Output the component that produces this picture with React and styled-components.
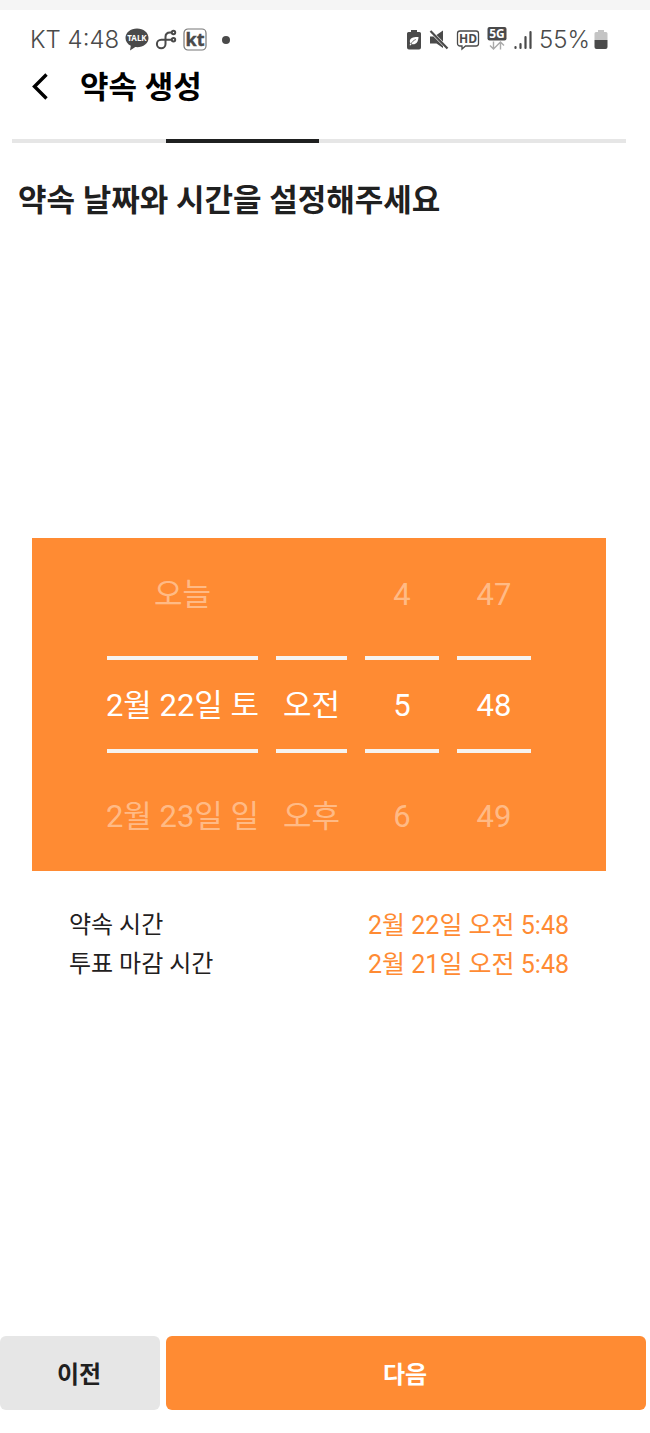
import React from "react";
import styled, { createGlobalStyle } from "styled-components";

const orange = "#ff8b33";
const ink = "#1f2020";
const statusInk = "#4a4a4a";

const GlobalStyle = createGlobalStyle`
  * { box-sizing: border-box; }
  body {
    margin: 0;
    background: #fff;
    color: ${ink};
    font-family: Roboto, "Noto Sans CJK KR", sans-serif;
  }
`;

const Screen = styled.div`
  display: flex;
  flex-direction: column;
  min-height: 100vh;
  border-top: 10px solid #f5f5f5;
`;

const StatusBar = styled.div`
  display: flex;
  justify-content: space-between;
  align-items: center;
  height: 48px;
  margin-top: 6px;
  padding: 0 42px 0 30px;
  color: ${statusInk};
  font-family: Inter, sans-serif;
  font-size: 24px;
  font-weight: 300;
  line-height: 32px;
`;

const StatusGroup = styled.div`
  display: flex;
  align-items: center;
  gap: ${({ $gap }) => $gap}px;
`;

const StatusDot = styled.span`
  width: 8px;
  height: 8px;
  margin-left: 9px;
  border-radius: 50%;
  background: ${statusInk};
`;

const Header = styled.header`
  display: flex;
  align-items: center;
  gap: 24px;
  height: 48px;
  padding-left: 24px;
`;

const BackButton = styled.button`
  display: flex;
  padding: 0;
  border: 0;
  background: none;
  color: #000;
  cursor: pointer;
`;

const Title = styled.h1`
  margin: 0;
  color: #000;
  font-size: 31px;
  font-weight: 700;
  line-height: 46px;
`;

const Progress = styled.div`
  display: grid;
  grid-template-columns: repeat(4, 1fr);
  height: 4px;
  margin: 27px 24px 0 12px;
`;

const Step = styled.span`
  background: ${({ $active }) => ($active ? ink : "#e6e6e6")};
`;

const Main = styled.main`
  flex: 1;
  padding-right: 12px;
`;

const Question = styled.h2`
  margin: 35px 18px 0;
  font-size: 31px;
  font-weight: 700;
  line-height: 46px;
`;

const Picker = styled.div`
  display: flex;
  justify-content: center;
  gap: 18px;
  margin: 314px 32px 0;
  background: ${orange};
`;

const Wheel = styled.ul`
  display: grid;
  grid-template-rows: repeat(3, 111px);
  grid-template-columns: 100%;
  align-items: center;
  width: ${({ $width }) => $width}px;
  margin: 0;
  padding: 0;
  list-style: none;
`;

const Option = styled.li`
  display: flex;
  align-items: center;
  justify-content: center;
  height: 97px;
  padding-top: 2px;
  border: solid ${({ $selected }) => ($selected ? "#f6f3f0" : "transparent")};
  border-width: 4px 0;
  color: ${({ $selected }) => ($selected ? "#fff" : "rgba(255, 255, 255, 0.42)")};
  font-size: 31px;
  line-height: 44px;
  white-space: nowrap;
`;

const Summary = styled.dl`
  margin: 35px 69px 0;
`;

const SummaryRow = styled.div`
  display: flex;
  justify-content: space-between;
  line-height: 39px;
`;

const Label = styled.dt`
  font-size: 24px;
`;

const Value = styled.dd`
  margin: 0;
  color: ${orange};
  font-size: 25px;
`;

const Footer = styled.footer`
  display: grid;
  grid-template-columns: 1fr 3fr;
  gap: 6px;
  padding: 0 4px 23px 0;
`;

const FooterButton = styled.button`
  height: 74px;
  padding: 0 2px 2px 0;
  border: 0;
  border-radius: 6px;
  background: ${({ $primary }) => ($primary ? orange : "#e6e6e6")};
  color: ${({ $primary }) => ($primary ? "#fff" : ink)};
  font-family: inherit;
  font-size: 24px;
  font-weight: 700;
  cursor: pointer;
`;

const TalkIcon = () => (
  <svg width="24" height="24" viewBox="0 0 24 24" aria-hidden="true">
    <path d="M12 0.500C5.600.5.500 4.500.5 10c0 3.400 2.100 6.200 5.300 7.800L5 22.500l5.300-3.400c7.300.8 13.200-3.300 13.200-9.100C23.500 4.500 18.400.5 12 .5Z" fill={statusInk} />
    <text x="12" y="13" textAnchor="middle" fontFamily="Noto Sans, sans-serif" fontSize="8" fontWeight="700" fill="#fff">TALK</text>
  </svg>
);

const RouteIcon = () => (
  <svg width="22" height="22" viewBox="0 0 22 22" fill="none" stroke={statusInk} strokeWidth="2" aria-hidden="true">
    <path d="M16.500 3.500h-1.500c-3 0-4.500 1.500-4.500 4.500v7a4.300 4.300 0 1 1-4.300-4.300h10.300" />
    <circle cx="18.500" cy="3.500" r="1.700" />
    <circle cx="18.500" cy="10.700" r="1.700" />
  </svg>
);

const KtIcon = () => (
  <svg width="24" height="24" viewBox="0 0 24 24" aria-hidden="true">
    <rect x="1" y="1" width="22" height="21" rx="4" fill="none" stroke="#777" strokeWidth="1.200" />
    <text x="12" y="18" textAnchor="middle" fontFamily="Noto Sans, sans-serif" fontSize="18" fontWeight="700" fill={statusInk} stroke={statusInk} strokeWidth=".4">kt</text>
  </svg>
);

const BatterySaverIcon = () => (
  <svg width="16" height="22" viewBox="0 0 16 22" aria-hidden="true">
    <path d="M5 1h6v2h2.500a1.500 1.500 0 0 1 1.500 1.500v14a2 2 0 0 1-2 2H3a2 2 0 0 1-2-2v-14A1.500 1.500 0 0 1 2.500 3H5Z" fill={statusInk} />
    <path d="M12.500 8c-5-.2-8.600.8-8.700 4.300 0 .9.300 1.600.8 2.100L3.500 16l.9.500 1.300-1.400c3.700 1.100 6.600-1.600 6.800-7.100Z" fill="#fff" />
    <path d="M5 15c1-2.200 2.600-3.600 4.800-4.500" fill="none" stroke={statusInk} strokeWidth=".8" />
  </svg>
);

const MuteIcon = () => (
  <svg width="20" height="22" viewBox="0 0 20 22" aria-hidden="true">
    <path d="M1 7.500h3.500L14 17v2L7.500 14.500H1Z" fill={statusInk} />
    <path d="M7.500 6 14 1.500v11Z" fill={statusInk} />
    <path d="M1.500 2 18.500 19.500" stroke={statusInk} strokeWidth="2.200" />
  </svg>
);

const HdIcon = () => (
  <svg width="24" height="22" viewBox="0 0 24 22" aria-hidden="true">
    <path d="M4 2h16a2.500 2.500 0 0 1 2.500 2.500v10A2.500 2.500 0 0 1 20 17H9.500L6 20v-3H4a2.500 2.500 0 0 1-2.500-2.500v-10A2.500 2.500 0 0 1 4 2Z" fill="none" stroke={statusInk} strokeWidth="1.300" />
    <text x="12" y="14" textAnchor="middle" fontFamily="Open Sans, sans-serif" fontSize="12" fontWeight="700" fill={statusInk}>HD</text>
  </svg>
);

const FiveGIcon = () => (
  <svg width="20" height="28" viewBox="0 0 20 28" aria-hidden="true">
    <rect x=".5" y="1" width="19" height="13.500" rx="2" fill={statusInk} />
    <text x="10" y="12" textAnchor="middle" fontFamily="Noto Sans, sans-serif" fontSize="12" fontWeight="700" fill="#fff">5G</text>
    <path d="M6.500 15.500v7.500M3 19.500 6.500 23 10 19.500M13.500 23.500v-7.500M10 19.500 13.500 16l3.500 3.500" fill="none" stroke="#aaa" strokeWidth="1.400" />
  </svg>
);

const SignalIcon = () => (
  <svg width="18" height="20" viewBox="0 0 18 20" stroke={statusInk} strokeWidth="2.200" strokeLinecap="round" aria-hidden="true">
    <path d="M1.500 18v-1M6.500 18v-4M11.500 18V7M16.500 18V2" />
  </svg>
);

const BatteryIcon = () => (
  <svg width="14" height="20" viewBox="0 0 14 20" aria-hidden="true">
    <path d="M4 0h6v2h2a1.500 1.500 0 0 1 1.500 1.500V10H.5V3.500A1.500 1.500 0 0 1 2 2h2Z" fill="#c4c4c4" />
    <path d="M.5 10h13v7a2 2 0 0 1-2 2h-9a2 2 0 0 1-2-2Z" fill={statusInk} />
  </svg>
);

const BackIcon = () => (
  <svg width="32" height="32" viewBox="0 0 32 32" fill="none" stroke="currentColor" strokeWidth="3.400" aria-hidden="true">
    <path d="M22.500 2.500 10.500 14.500l12 12" />
  </svg>
);

const wheels = [
  { name: "날짜", width: 151, options: ["오늘", "2월 22일 토", "2월 23일 일"] },
  { name: "오전/오후", width: 71, options: ["", "오전", "오후"] },
  { name: "시", width: 74, options: ["4", "5", "6"] },
  { name: "분", width: 74, options: ["47", "48", "49"] },
];

const summary = [
  { label: "약속 시간", value: "2월 22일 오전 5:48" },
  { label: "투표 마감 시간", value: "2월 21일 오전 5:48" },
];

export default function App() {
  return (
    <Screen>
      <GlobalStyle />
      <StatusBar>
        <StatusGroup $gap={6}>
          <span>KT 4:48</span>
          <TalkIcon />
          <RouteIcon />
          <KtIcon />
          <StatusDot />
        </StatusGroup>
        <StatusGroup $gap={7}>
          <BatterySaverIcon />
          <MuteIcon />
          <HdIcon />
          <FiveGIcon />
          <SignalIcon />
          <StatusGroup $gap={4}>
            <span>55%</span>
            <BatteryIcon />
          </StatusGroup>
        </StatusGroup>
      </StatusBar>
      <Header>
        <BackButton type="button" aria-label="뒤로">
          <BackIcon />
        </BackButton>
        <Title>약속 생성</Title>
      </Header>
      <Progress role="progressbar" aria-label="진행 단계" aria-valuemin={1} aria-valuemax={4} aria-valuenow={2}>
        {[1, 2, 3, 4].map((step) => (
          <Step key={step} $active={step === 2} />
        ))}
      </Progress>
      <Main>
        <Question>약속 날짜와 시간을 설정해주세요</Question>
        <Picker>
          {wheels.map(({ name, width, options }) => (
            <Wheel key={name} role="listbox" aria-label={name} $width={width}>
              {options.map((text, i) => (
                <Option
                  key={i}
                  role={text ? "option" : "presentation"}
                  aria-selected={text ? i === 1 : undefined}
                  $selected={i === 1}
                >
                  {text}
                </Option>
              ))}
            </Wheel>
          ))}
        </Picker>
        <Summary>
          {summary.map(({ label, value }) => (
            <SummaryRow key={label}>
              <Label>{label}</Label>
              <Value>{value}</Value>
            </SummaryRow>
          ))}
        </Summary>
      </Main>
      <Footer>
        <FooterButton type="button">이전</FooterButton>
        <FooterButton type="button" $primary>다음</FooterButton>
      </Footer>
    </Screen>
  );
}
